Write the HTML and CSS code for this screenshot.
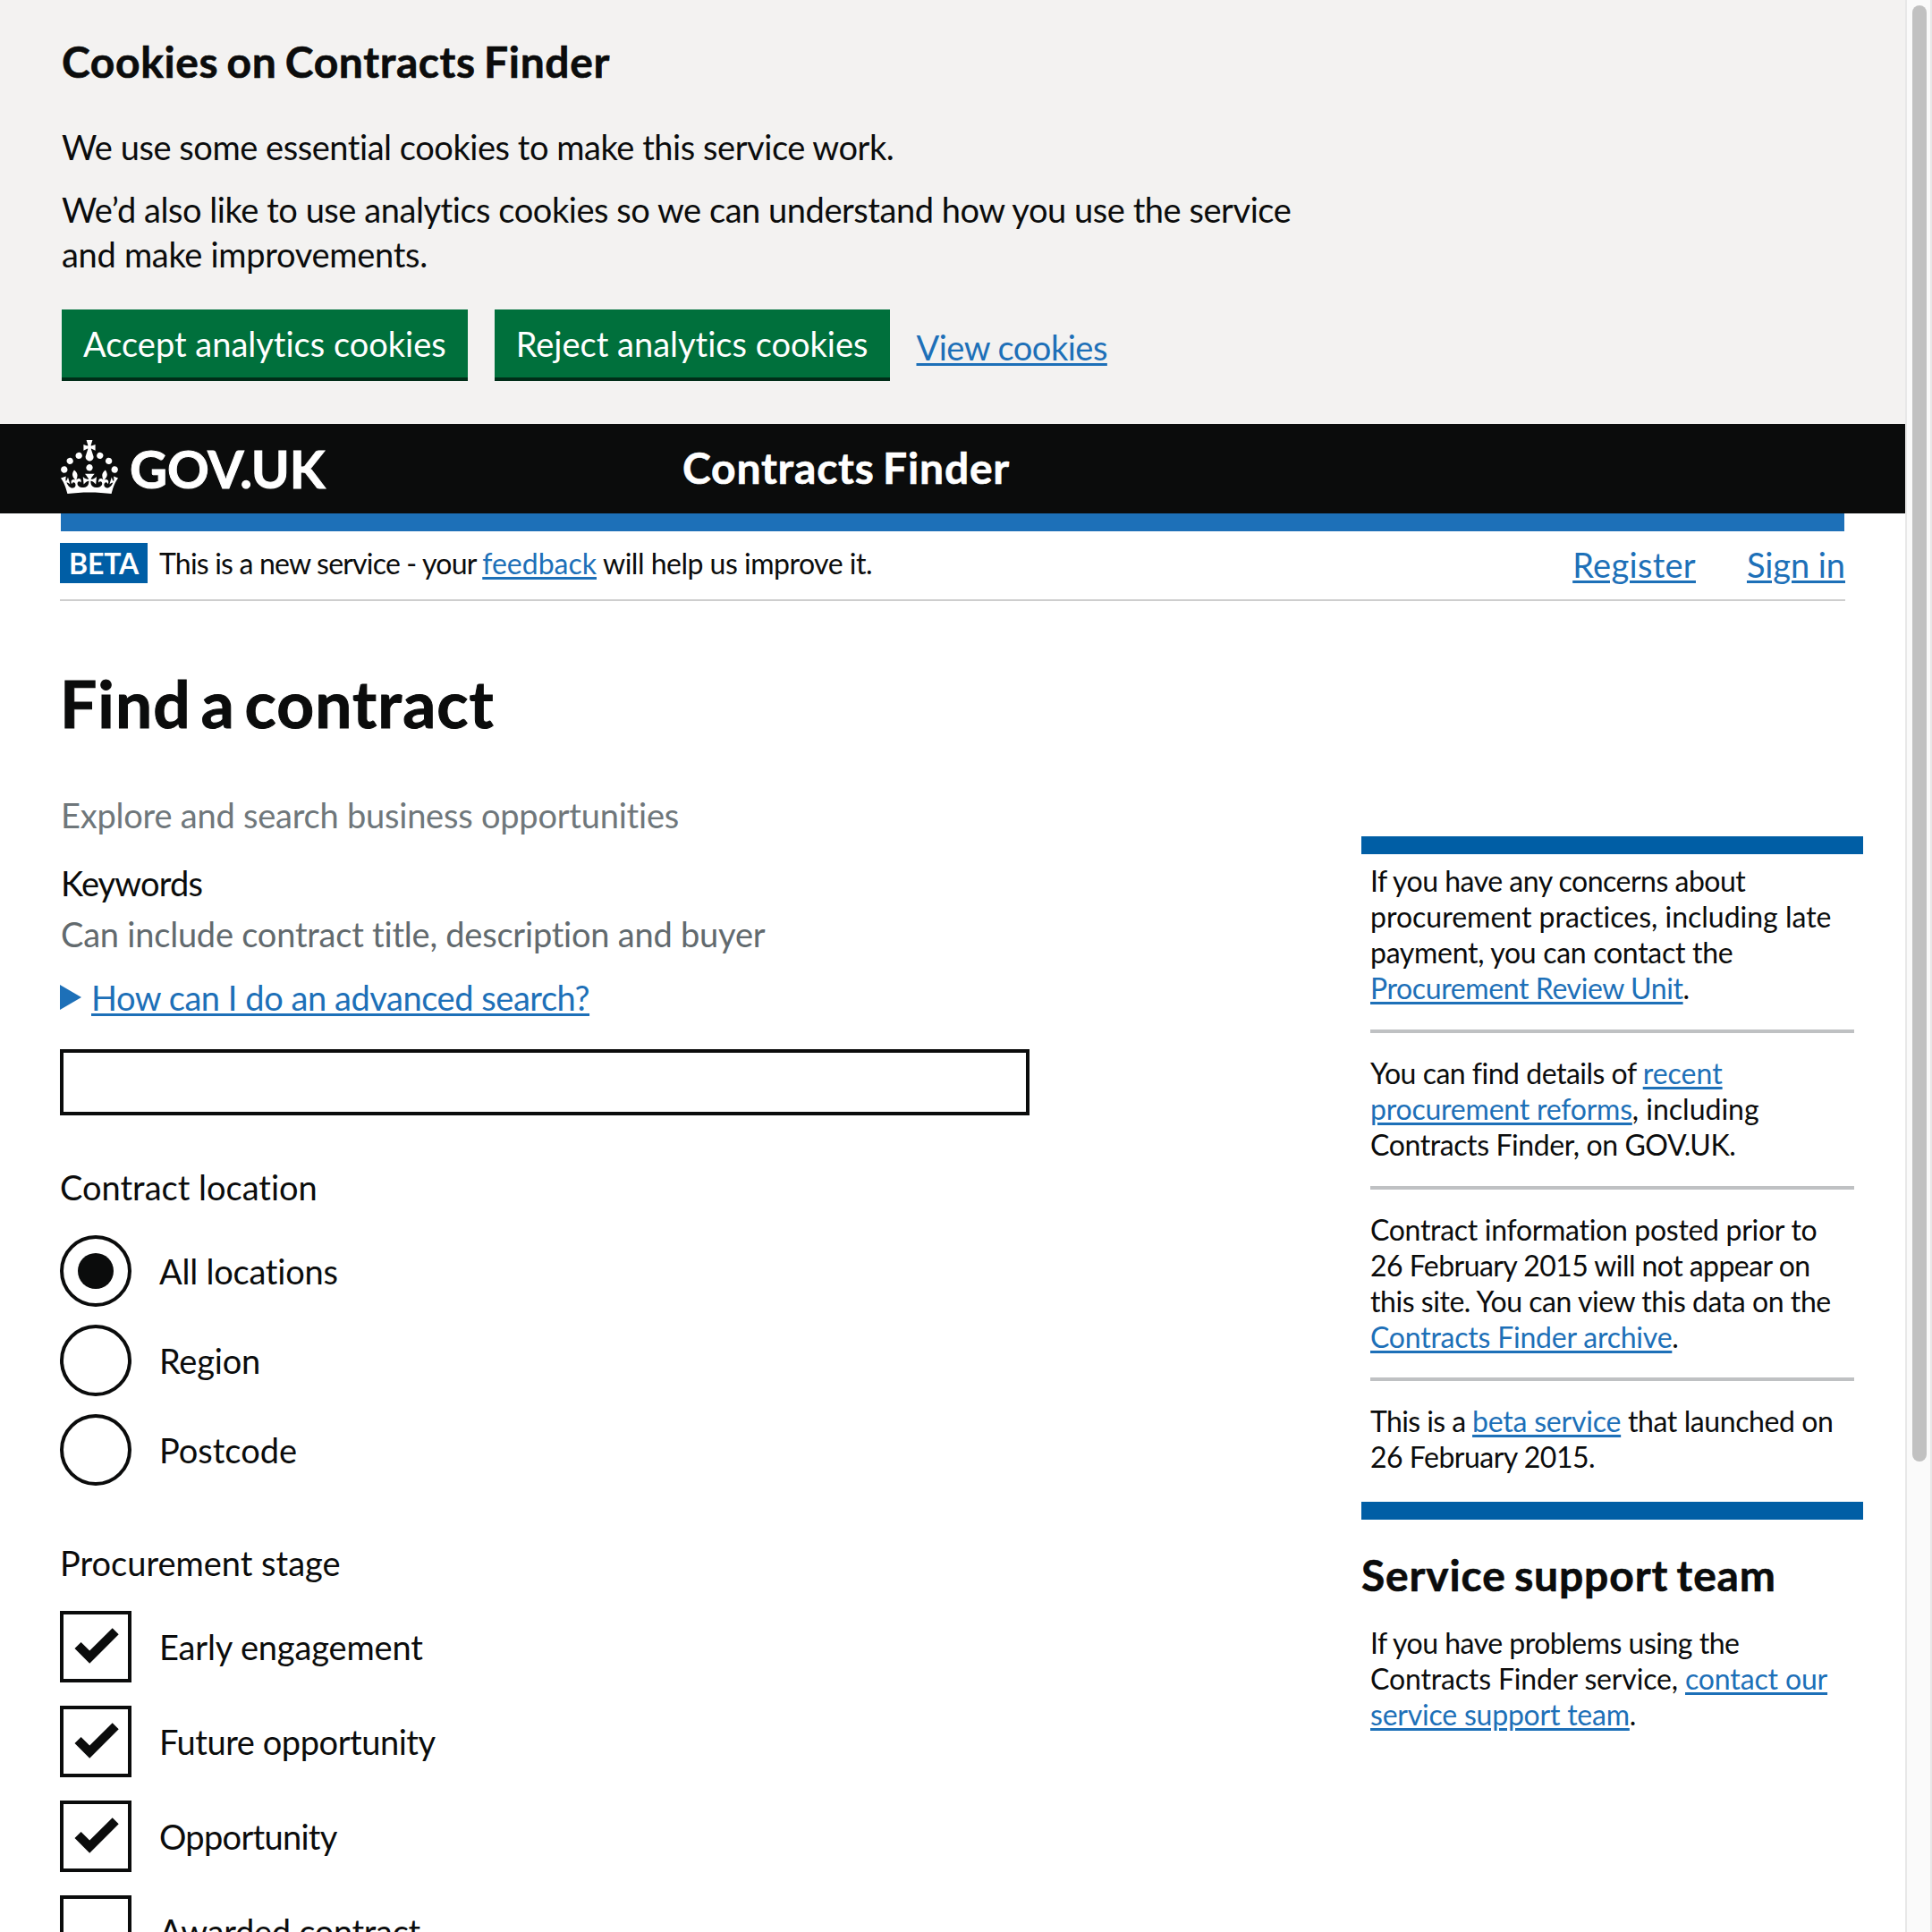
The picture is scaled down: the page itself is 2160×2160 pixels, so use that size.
FILE: index.html
```html
<!DOCTYPE html>
<html lang="en">
<head>
<meta charset="utf-8">
<title>Contracts Finder</title>
<link rel="stylesheet" href="styles.css">
</head>
<body>
<div class="page">
  <section class="cookies">
    <h2 class="cookies-title">Cookies on Contracts Finder</h2>
    <p class="k45">We use some essential cookies to make this service work.</p>
    <p class="k45">We’d also like to use analytics cookies so we can understand how you use the service<br><span class="k30">and make improvements.</span></p>
    <div class="actions">
      <button class="btn k00">Accept analytics cookies</button>
      <button class="btn k00">Reject analytics cookies</button>
      <a href="#" class="k50">View cookies</a>
    </div>
  </section>

  <header class="header">
    <div class="logo">
      <svg class="crown" viewBox="0 0 32 30" width="64" height="60" fill="#fff"><path d="M22.6 10.4c-1 .4-2-.1-2.4-1-.4-.9.1-2 1-2.4.9-.4 2 .1 2.4 1s-.1 2-1 2.4m-5.9 6.7c-.9.4-2-.1-2.4-1-.4-.9.1-2 1-2.4.9-.4 2 .1 2.4 1s-.1 2-1 2.4m10.8-3.7c-1 .4-2-.1-2.4-1-.4-.9.1-2 1-2.4.9-.4 2 .1 2.4 1s0 2-1 2.4m3.3 4.8c-1 .4-2-.1-2.4-1-.4-.9.1-2 1-2.4.9-.4 2 .1 2.4 1s-.1 2-1 2.4M17 4.7l2.3 1.2V2.5l-2.3.7-.2-.2.9-3h-3.4l.9 3-.2.2c-.1.1-2.3-.7-2.3-.7v3.4L15 4.7c.1.1.1.2.2.2l-1.3 4c-.1.2-.1.4-.1.6 0 1.1.8 2 1.9 2.2h.7c1-.2 1.9-1.1 1.9-2.1 0-.2 0-.4-.1-.6l-1.3-4c-.1-.2 0-.2.1-.3m-7.6 5.7c.9.4 2-.1 2.4-1 .4-.9-.1-2-1-2.4-.9-.4-2 .1-2.4 1s0 2 1 2.4m-5 3c.9.4 2-.1 2.4-1 .4-.9-.1-2-1-2.4-.9-.4-2 .1-2.4 1s.1 2 1 2.4m-3.2 4.8c.9.4 2-.1 2.4-1 .4-.9-.1-2-1-2.4-.9-.4-2 .1-2.4 1s0 2 1 2.4m14.8 11c4.4 0 8.6.3 12.3.8 1.1-4.5 2.4-7 3.7-8.8l-2.5-.9c.2 1.3.3 1.9 0 2.7-.4-.4-.8-1.1-1.1-2.3l-1.2 4c.7-.5 1.3-.8 2-.9-1.1 2.5-2.6 3.1-3.5 3-1.1-.2-1.7-1.2-1.5-2.1.3-1.2 1.5-1.5 2.1-.1 1.1-2.3-.8-3-2-2.3 1.9-1.9 2.1-3.5.6-5.6-2.1 1.6-2.1 3.2-1.2 5.5-1.2-1.4-3.2-.6-2.5 1.6.9-1.4 2.1-.5 1.9.8-.2 1.1-1.7 2.1-3.5 1.9-2.7-.2-2.9-2.1-2.9-3.6.7-.1 1.9.5 2.9 1.9l.4-4.3c-1.1 1.1-2.1 1.4-3.2 1.4.4-1.2 2.1-3 2.1-3h-5.4s1.7 1.9 2.1 3c-1.1 0-2.1-.2-3.2-1.4l.4 4.3c1-1.4 2.2-2 2.9-1.9-.1 1.5-.2 3.4-2.9 3.6-1.9.2-3.4-.8-3.5-1.9-.2-1.3 1-2.2 1.9-.8.7-2.3-1.2-3-2.5-1.6.9-2.2.9-3.9-1.2-5.5-1.5 2-1.3 3.7.6 5.6-1.2-.7-3.1 0-2 2.3.6-1.4 1.8-1.1 2.1.1.2.9-.3 1.9-1.5 2.1-.9.2-2.4-.5-3.5-3 .6 0 1.2.3 2 .9l-1.2-4c-.3 1.1-.7 1.9-1.1 2.3-.3-.8-.2-1.4 0-2.7l-2.9.9C1.3 23 2.6 25.5 3.7 30c3.7-.5 7.9-.8 12.3-.8"/></svg>
      <span class="logo-text">GOV.UK</span>
    </div>
    <span class="service-name">Contracts Finder</span>
  </header>
  <div class="header-bar"></div>

  <div class="phase">
    <strong class="tag">BETA</strong>
    <p class="phase-text"><span class="k80">This is a new service - your </span><a href="#" class="k00">feedback</a><span class="k50"> will help us improve it.</span></p>
    <nav class="account"><a href="#" class="w30">Register</a><a href="#" class="k10">Sign in</a></nav>
  </div>

  <div class="columns">
    <main class="main">
      <h1>Find a contract</h1>
      <p class="intro k20">Explore and search business opportunities</p>
      <div class="field">
        <label class="label k85">Keywords</label>
        <p class="hint k20">Can include contract title, description and buyer</p>
        <div class="details">
          <svg width="24" height="28" viewBox="0 0 24 28" fill="#1d70b8"><path d="M0 0L24 14L0 28Z"/></svg>
          <a href="#" class="k45">How can I do an advanced search?</a>
        </div>
        <input class="input" type="text">
      </div>

      <fieldset class="group radios">
        <legend class="k00">Contract location</legend>
        <label class="choice"><span class="radio"><span class="dot"></span></span><span class="k20">All locations</span></label>
        <label class="choice"><span class="radio"></span><span class="k20">Region</span></label>
        <label class="choice"><span class="radio"></span><span class="k00">Postcode</span></label>
      </fieldset>

      <fieldset class="group checks">
        <legend class="k00">Procurement stage</legend>
        <label class="choice"><span class="box"><svg class="tick" viewBox="0 0 80 80"><path d="M16.5 42L23.6 34.9L33.2 44.6L58.7 19.3L65.7 26.3L33.2 58.7Z"/></svg></span><span class="k15">Early engagement</span></label>
        <label class="choice"><span class="box"><svg class="tick" viewBox="0 0 80 80"><path d="M16.5 42L23.6 34.9L33.2 44.6L58.7 19.3L65.7 26.3L33.2 58.7Z"/></svg></span><span class="k45">Future opportunity</span></label>
        <label class="choice"><span class="box"><svg class="tick" viewBox="0 0 80 80"><path d="M16.5 42L23.6 34.9L33.2 44.6L58.7 19.3L65.7 26.3L33.2 58.7Z"/></svg></span><span class="k70">Opportunity</span></label>
        <label class="choice"><span class="box"></span><span class="k30">Awarded contract</span></label>
      </fieldset>
    </main>

    <aside class="aside">
      <div class="notices">
        <p><span class="k50">If you have any concerns about</span><br><span class="k00">procurement practices, including late</span><br><span class="k30">payment, you can contact the</span><br><a href="#" class="k40">Procurement Review Unit</a>.</p>
        <p><span class="k50">You can find details of </span><a href="#"><span class="k00">recent</span><br><span class="k20">procurement reforms</span></a>, including<br><span class="k40">Contracts Finder, on GOV.UK.</span></p>
        <p><span class="k30">Contract information posted prior to</span><br><span class="k55">26 February 2015 will not appear on</span><br><span class="k45">this site. You can view this data on the</span><br><a href="#" class="k20">Contracts Finder archive</a>.</p>
        <p><span class="k60">This is a </span><a href="#" class="k20">beta service</a><span class="k40"> that launched on</span><br><span class="k50">26 February 2015.</span></p>
      </div>
      <h2 class="support-title">Service support team</h2>
      <p class="support"><span class="k50">If you have problems using the</span><br><span class="k15">Contracts Finder service, </span><a href="#"><span class="k15">contact our</span><br><span class="k20">service support team</span></a>.</p>
    </aside>
  </div>
</div>
<div class="scrollbar"><div class="thumb"></div></div>
</body>
</html>
```
FILE: styles.css
```css
* { box-sizing: border-box; }

body {
  margin: 0;
  display: flex;
  width: 2160px;
  height: 2160px;
  overflow: hidden;
  background: #fff;
  color: #0b0c0c;
  font: 38px/50px Lato, "Noto Sans", sans-serif;
  font-variant-ligatures: none;
}

h1, h2, p { margin: 0; }
p, label, legend { white-space: nowrap; }

a {
  color: #1d70b8;
  text-decoration: underline;
  text-decoration-thickness: 3px;
  text-underline-offset: 3px;
}

.page { flex: none; width: 2130px; height: 2160px; overflow: hidden; }

/* Tracking steps, in hundredths of a pixel */
.k00 { letter-spacing: 0; }
.k10 { letter-spacing: -0.08px; }
.k15 { letter-spacing: -0.15px; }
.k20 { letter-spacing: -0.22px; }
.k30 { letter-spacing: -0.3px; }
.k40 { letter-spacing: -0.4px; }
.k45 { letter-spacing: -0.45px; }
.k50 { letter-spacing: -0.5px; }
.k55 { letter-spacing: -0.55px; }
.k60 { letter-spacing: -0.6px; }
.k70 { letter-spacing: -0.7px; }
.k80 { letter-spacing: -0.8px; }
.k85 { letter-spacing: -0.85px; }
.w30 { letter-spacing: 0.3px; }

/* Cookie banner */
.cookies { height: 474px; padding: 39px 69px 0; background: #f3f2f1; }
.cookies-title { font-size: 48px; line-height: 60px; letter-spacing: 0.62px; word-spacing: -3px; margin-bottom: 40px; -webkit-text-stroke: 0.6px; }
.cookies p { margin-bottom: 20px; }
.actions { display: flex; align-items: flex-start; margin-top: 37px; }
.actions a { margin-top: 17px; }
.btn {
  height: 76px;
  margin: 0 30px 0 0;
  padding: 19px 24px;
  border: 0;
  background: #00703c;
  box-shadow: 0 4px 0 #002d18;
  color: #fff;
  font: inherit;
  line-height: 38px;
}

/* Header */
.header { display: flex; align-items: center; height: 100px; padding-left: 68px; background: #0b0c0c; color: #fff; }
.logo { display: flex; align-items: center; width: 695px; height: 60px; margin-top: -4px; }
.logo-text { margin: 4px 0 0 13px; font-size: 58px; line-height: 60px; font-weight: 700; letter-spacing: -0.2px; -webkit-text-stroke: 1px; }
.service-name { font-size: 48px; line-height: 60px; font-weight: 700; letter-spacing: 0.8px; word-spacing: -3px; -webkit-text-stroke: 0.6px; margin-top: -3px; }
.header-bar { height: 20px; margin: 0 68px; background: #1d70b8; }

.phase { display: flex; align-items: flex-start; width: 1996px; height: 78px; margin-left: 67px; border-bottom: 2px solid #cecece; }
.tag { width: 98px; height: 45px; margin-top: 13px; background: #005ea5; color: #fff; font-size: 32px; line-height: 46px; text-align: center; letter-spacing: -0.2px; }
.phase-text { margin: 16px 0 0 13px; font-size: 32px; line-height: 40px; white-space: pre; }
.account { display: flex; gap: 57px; margin: 12px 0 0 auto; }

/* Two-column body */
.columns { display: flex; justify-content: space-between; padding: 0 47px 0 67px; }
.main { width: 1084px; padding-top: 74px; }
.main h1 { font-size: 73px; line-height: 80px; letter-spacing: 1.1px; word-spacing: -8px; margin-bottom: 60px; -webkit-text-stroke: 1px; }
.intro { color: #6f777b; margin: 0 0 26px 1px; }
.field { display: flex; flex-direction: column; }
.label { margin: 0 0 7px 1px; }
.hint { color: #626a6e; margin: 0 0 21px 1px; }
.details { display: flex; align-items: flex-start; gap: 11px; margin-bottom: 33px; }
.details svg { margin-top: 11px; }
.input { width: 1084px; height: 74px; margin: 0; padding: 0; border: 4px solid #0b0c0c; background: #fff; }

.group { display: flex; flex-direction: column; margin: 55px 0 0; padding: 0; border: 0; min-width: 0; }
.group + .group { margin-top: 61px; }
.group legend { padding: 0; margin-bottom: 29px; }
.radios { gap: 20px; }
.checks { gap: 26px; }
.choice { display: flex; align-items: center; gap: 31px; height: 80px; }
.radio, .box { display: flex; align-items: center; justify-content: center; flex: none; width: 80px; height: 80px; border: 4px solid #0b0c0c; }
.radio { border-radius: 50%; }
.dot { width: 40px; height: 40px; border-radius: 50%; background: #0b0c0c; }
.tick { flex: none; width: 80px; height: 80px; fill: #0b0c0c; }

.aside { width: 561px; padding-top: 263px; font-size: 32px; line-height: 40px; }
.notices { padding: 10px 10px 30px; border: solid #005ea5; border-width: 20px 0; }
.notices p + p { margin-top: 26px; padding-top: 25px; border-top: 4px solid #bfc1c3; }
.notices p:last-child { margin-top: 25px; }
.support-title { margin-top: 32px; font-size: 48px; line-height: 60px; letter-spacing: 0.85px; word-spacing: -3px; -webkit-text-stroke: 0.6px; }
.support { margin: 26px 10px 0; }

.scrollbar { flex: none; width: 30px; height: 2160px; padding: 6px 0 0 6px; background: #fafafa; border: solid #e8e8e8; border-width: 0 2px; }
.thumb { width: 16px; height: 1628px; border-radius: 8px; background: #c1c1c1; }
```
